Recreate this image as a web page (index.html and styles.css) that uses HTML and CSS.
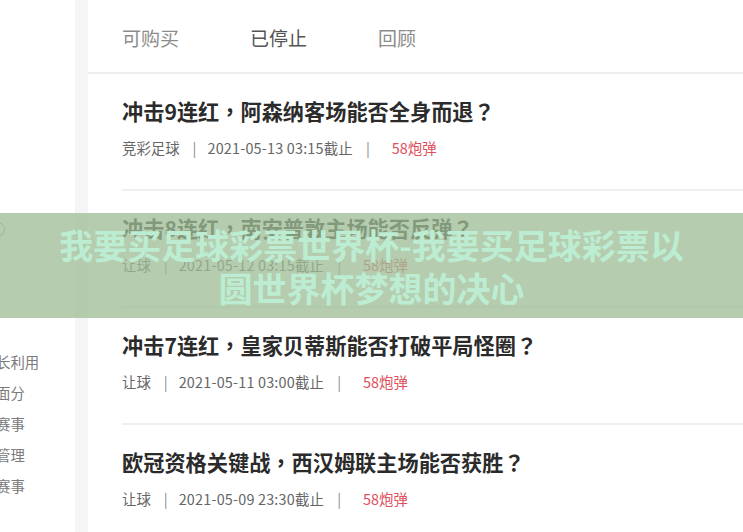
FILE: index.html
```html
<!DOCTYPE html>
<html lang="zh-CN">
<head>
<meta charset="utf-8">
<title>我要买足球彩票世界杯</title>
<link rel="stylesheet" href="styles.css">
</head>
<body>
  <div class="page">
    <aside class="sidebar">
      <span class="help-dot"></span>
      <ul class="side-menu">
        <li>长利用</li>
        <li>面分</li>
        <li>赛事</li>
        <li>管理</li>
        <li>赛事</li>
      </ul>
    </aside>

    <main class="panel">
      <nav class="tabs">
        <a class="tab">可购买</a>
        <a class="tab tab-active">已停止</a>
        <a class="tab">回顾</a>
      </nav>

      <ul class="list">
        <li class="item">
          <h3 class="title">冲击9连红<span class="punct" lang="zh-TW">，</span>阿森纳客场能否全身而退<span class="punct" lang="zh-TW">？</span></h3>
          <p class="meta"><span>竞彩足球</span><span class="sep">|</span><span class="date">2021-05-13 03:15截止</span><span class="sep">|</span><span class="bullets">58炮弹</span></p>
        </li>
        <li class="item">
          <h3 class="title">冲击8连红<span class="punct" lang="zh-TW">，</span>南安普敦主场能否反弹<span class="punct" lang="zh-TW">？</span></h3>
          <p class="meta"><span>让球</span><span class="sep">|</span><span class="date">2021-05-12 03:15截止</span><span class="sep">|</span><span class="bullets">58炮弹</span></p>
        </li>
        <li class="item">
          <h3 class="title">冲击7连红<span class="punct" lang="zh-TW">，</span>皇家贝蒂斯能否打破平局怪圈<span class="punct" lang="zh-TW">？</span></h3>
          <p class="meta"><span>让球</span><span class="sep">|</span><span class="date">2021-05-11 03:00截止</span><span class="sep">|</span><span class="bullets">58炮弹</span></p>
        </li>
        <li class="item">
          <h3 class="title">欧冠资格关键战<span class="punct" lang="zh-TW">，</span>西汉姆联主场能否获胜<span class="punct" lang="zh-TW">？</span></h3>
          <p class="meta"><span>让球</span><span class="sep">|</span><span class="date">2021-05-09 23:30截止</span><span class="sep">|</span><span class="bullets">58炮弹</span></p>
        </li>
      </ul>
    </main>
  </div>

  <div class="banner">
    <h1 class="banner-title">我要买足球彩票世界杯-我要买足球彩票以<br>圆世界杯梦想的决心</h1>
  </div>
</body>
</html>
```

FILE: styles.css
```css
* {
  box-sizing: border-box;
}

html, body {
  margin: 0;
  padding: 0;
  height: 100%;
}

body {
  background: #f4f5f7;
  font-family: "Noto Sans CJK SC", "Noto Sans", sans-serif;
  overflow: hidden;
}

.page {
  display: flex;
  gap: 13px;
  height: 100%;
}

/* left navigation column, clipped on its left side */
.sidebar {
  width: 75px;
  flex: none;
  background: #ffffff;
  overflow: hidden;
  padding-top: 222px;
}

.help-dot {
  display: block;
  width: 15px;
  height: 15px;
  margin-left: -10px;
  border: 1.5px solid #9a9a9a;
  border-radius: 50%;
}

.side-menu {
  list-style: none;
  margin: 109px 0 0 -4px;
  padding: 0;
  white-space: nowrap;
}

.side-menu li {
  font-size: 14.4px;
  line-height: 31px;
  color: #7a7a7a;
}

/* main content card */
.panel {
  flex: 1;
  background: #ffffff;
  min-width: 0;
}

.tabs {
  display: flex;
  align-items: center;
  height: 74px;
  padding: 3px 0 0 34px;
  border-bottom: 2px solid #eeeeee;
}

.tab {
  width: 128px;
  font-size: 19px;
  color: #8c8c8c;
}

.tab-active {
  color: #555555;
}

.list {
  list-style: none;
  margin: 0 0 0 34px;
  padding: 0;
}

.item {
  padding: 25px 0 32px;
  border-bottom: 2px solid #efefef;
}

.title {
  margin: 0;
  font-size: 21.2px;
  line-height: 24px;
  font-weight: 700;
  color: #2b2b2b;
  white-space: nowrap;
  text-spacing-trim: space-all;
}

/* centred full-width punctuation */
.punct {
  font-family: "Noto Sans CJK TC", "Noto Sans CJK SC", sans-serif;
}

.meta {
  display: flex;
  margin: 16px 0 0;
  font-size: 14.4px;
  line-height: 18px;
  color: #666666;
  white-space: nowrap;
}

.date {
  letter-spacing: 0.2px;
}

.sep {
  margin: 0 11px 0 13px;
  color: #8a8a8a;
}

.bullets {
  margin-left: 11px;
  color: #e0505c;
}

/* translucent promo strip laid over the list */
.banner {
  position: absolute;
  top: 213px;
  left: 0;
  right: 0;
  height: 105px;
  padding-top: 10px;
  background: rgba(158, 188, 150, 0.76);
  text-align: center;
}

.banner-title {
  margin: 0;
  font-size: 34px;
  line-height: 43px;
  font-weight: 700;
  color: #bcedd2;
  white-space: nowrap;
}
```
